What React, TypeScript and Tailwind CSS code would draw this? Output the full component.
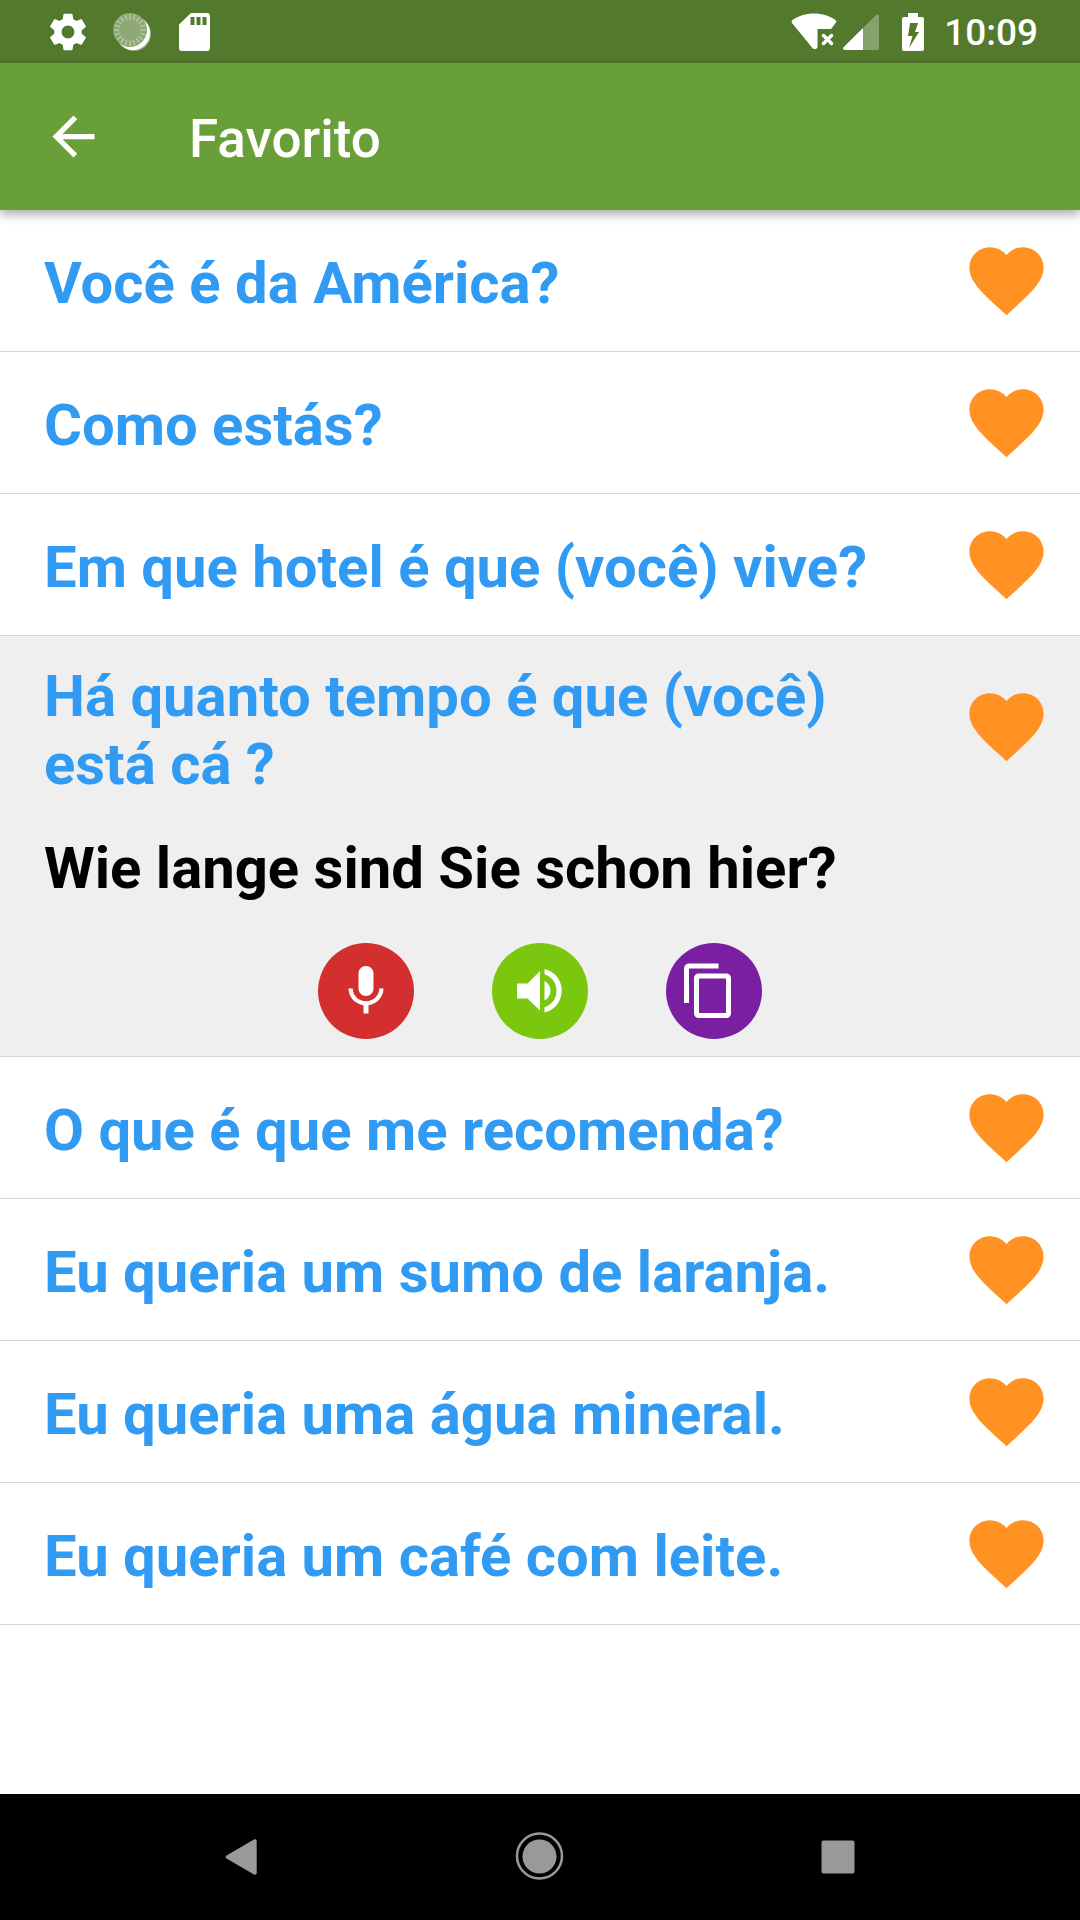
import React from "react";

type Phrase = { text: string; translation?: string };

const phrases: Phrase[] = [
  { text: "Você é da América?" },
  { text: "Como estás?" },
  { text: "Em que hotel é que (você) vive?" },
  {
    text: "Há quanto tempo é que (você) está cá ?",
    translation: "Wie lange sind Sie schon hier?",
  },
  { text: "O que é que me recomenda?" },
  { text: "Eu queria um sumo de laranja." },
  { text: "Eu queria uma água mineral." },
  { text: "Eu queria um café com leite." },
];

function StatusBar() {
  const ticks = Array.from({ length: 20 }, (_, i) => i * 18);
  return (
    <div className="flex h-[63px] items-center justify-between bg-[#52792c] pr-[42px] pl-[46px] text-white">
      <div className="flex items-center gap-[21px]">
        <svg className="size-[44px]" viewBox="0 0 24 24" fill="currentColor" aria-hidden="true">
          <path d="M19.43 12.98c.04-.32.07-.64.07-.98s-.03-.66-.07-.98l2.11-1.65c.19-.15.24-.42.12-.64l-2-3.46c-.12-.22-.39-.3-.61-.22l-2.49 1c-.52-.4-1.08-.73-1.69-.98l-.38-2.65C14.46 2.18 14.25 2 14 2h-4c-.25 0-.46.18-.49.42l-.38 2.65c-.61.25-1.17.59-1.69.98l-2.49-1c-.23-.09-.49 0-.61.22l-2 3.46c-.13.22-.07.49.12.64l2.11 1.65c-.04.32-.07.65-.07.98s.03.66.07.98l-2.11 1.65c-.19.15-.24.42-.12.64l2 3.46c.12.22.39.3.61.22l2.49-1c.52.4 1.08.73 1.69.98l.38 2.65c.03.24.24.42.49.42h4c.25 0 .46-.18.49-.42l.38-2.65c.61-.25 1.17-.59 1.69-.98l2.49 1c.23.09.49 0 .61-.22l2-3.46c.12-.22.07-.49-.12-.64l-2.11-1.65zM12 15.5c-1.93 0-3.5-1.57-3.5-3.5s1.57-3.5 3.5-3.5 3.5 1.57 3.5 3.5-1.57 3.5-3.5 3.5z" />
        </svg>
        <svg className="size-[42px]" viewBox="0 0 42 42" aria-hidden="true">
          <circle cx="23" cy="23" r="17" fill="#fff" opacity="0.45" />
          <circle cx="22" cy="22" r="17" fill="#fff" />
          <circle cx="19" cy="19" r="17" fill="#8ea876" />
          {ticks.map((angle) => (
            <path key={angle} d="M19 3v5.500" stroke="#bccbad" strokeWidth="1.300" transform={"rotate(" + angle + " 19 19)"} />
          ))}
        </svg>
        <svg className="size-[42px]" viewBox="0 0 42 42" fill="currentColor" aria-hidden="true">
          <path fillRule="evenodd" d="M17 2h16a3 3 0 0 1 3 3v32a3 3 0 0 1-3 3H8a3 3 0 0 1-3-3V13.500zM16.500 6v8h4V6zM22.500 6v8h4V6zM28.500 6v8h4V6z" />
        </svg>
      </div>
      <div className="flex items-center">
        <svg className="h-[42px] w-[46px]" viewBox="0 0 46 42" fill="currentColor" aria-hidden="true">
          <path d="M1 9.500C13 .300 33 .300 45 9.500c.400.600.300 1.500 0 2l-5 6.500H26.500v18.500c-1.500 2-4 2-5.500 0L1 12c-.400-.900-.500-1.800 0-2.500z" />
          <path d="M32.500 24.500l8 8m0-8l-8 8" stroke="currentColor" strokeWidth="3.500" strokeLinecap="round" />
        </svg>
        <svg className="ml-[6px] h-[42px] w-[36px]" viewBox="0 0 36 42" fill="currentColor" aria-hidden="true">
          <path d="M20 17L33 4c1-.800 3-.400 3 1.500V37a2 2 0 0 1-2 2H20z" opacity="0.300" />
          <path d="M20 17v22H2c-1.800 0-2.600-1.500-1.500-2.700z" />
        </svg>
        <svg className="ml-[22px] h-[42px] w-[24px]" viewBox="0 0 24 42" fill="currentColor" aria-hidden="true">
          <path fillRule="evenodd" d="M7 2h10v4h4a2 2 0 0 1 2 2v30a2 2 0 0 1-2 2H3a2 2 0 0 1-2-2V8a2 2 0 0 1 2-2h4zM9 12L7 25h4.500L8 37l10-16h-4l3-9z" />
        </svg>
        <time className="ml-[19px] pt-[2px] text-[37px] leading-[43px] font-medium">10:09</time>
      </div>
    </div>
  );
}

function Heart() {
  return (
    <svg className="block size-[89px]" viewBox="0 0 24 24" fill="#ff9222" aria-hidden="true">
      <path d="M12 21.350l-1.450-1.320C5.400 15.360 2 12.280 2 8.500 2 5.420 4.420 3 7.500 3c1.740 0 3.410.810 4.500 2.090C13.090 3.810 14.760 3 16.500 3 19.580 3 22 5.420 22 8.500c0 3.780-3.400 6.860-8.550 11.540L12 21.350z" />
    </svg>
  );
}

function Actions() {
  return (
    <div className="flex justify-center gap-[78px] pt-[41px] pb-[17px]">
      <button type="button" aria-label="Gravar" className="flex size-[96px] items-center justify-center rounded-full bg-[#d32f2f]">
        <svg className="size-[60px]" viewBox="0 0 24 24" fill="#fff" aria-hidden="true">
          <path d="M12 14c1.660 0 2.990-1.340 2.990-3L15 5c0-1.660-1.340-3-3-3S9 3.340 9 5v6c0 1.660 1.340 3 3 3zm5.300-3c0 3-2.540 5.100-5.300 5.100S6.700 14 6.700 11H5c0 3.410 2.720 6.230 6 6.720V21h2v-3.280c3.280-.480 6-3.300 6-6.720h-1.700z" />
        </svg>
      </button>
      <button type="button" aria-label="Ouvir" className="flex size-[96px] items-center justify-center rounded-full bg-[#7bc70f]">
        <svg className="size-[96px]" viewBox="0 0 96 96" fill="#fff" aria-hidden="true">
          <path d="M25 40.500v15h10.500L48 67.500V28L35.500 40.500zM52.500 38c8 4 8 15.500 0 19.500zM52.500 26c23 5.500 23 38 0 43.500v-5.200c16-5 16-28 0-33z" />
        </svg>
      </button>
      <button type="button" aria-label="Copiar" className="flex size-[96px] items-center justify-center rounded-full bg-[#7b1fa2]">
        <svg className="size-[96px]" viewBox="0 0 96 96" fill="none" stroke="#fff" strokeWidth="5" aria-hidden="true">
          <path d="M20.500 60V25.500a2.500 2.500 0 0 1 2.500-2.500H52.500" />
          <rect x="30.500" y="33" width="32" height="39.500" rx="2" />
        </svg>
      </button>
    </div>
  );
}

function PhraseRow({ phrase }: { phrase: Phrase }) {
  const open = phrase.translation !== undefined;
  return (
    <li className={open ? "border-b border-[#d7d7d7] bg-[#efefef]" : "border-b border-[#d7d7d7] bg-white"}>
      <div className={open ? "flex items-center pt-[18px] pr-[29px] pl-[44px]" : "flex h-[141px] items-center pr-[29px] pl-[44px]"}>
        <h2
          className={
            open
              ? "min-w-0 flex-1 pt-[8px] pr-[80px] text-[58px] leading-[68px] font-bold text-[#319af2]"
              : "min-w-0 flex-1 pt-[4px] pr-[80px] text-[58px] leading-[68px] font-bold text-[#319af2]"
          }
        >
          {phrase.text}
        </h2>
        <button type="button" aria-label="Remover dos favoritos" aria-pressed="true">
          <Heart />
        </button>
      </div>
      {open && (
        <>
          <p className="mt-[36px] px-[44px] text-[58px] leading-[68px] font-bold text-black">{phrase.translation}</p>
          <Actions />
        </>
      )}
    </li>
  );
}

function NavigationBar() {
  return (
    <nav className="flex h-[126px] items-center justify-center gap-[202px] bg-black text-[#999999]">
      <button type="button" aria-label="Voltar">
        <svg className="size-[96px]" viewBox="0 0 96 96" fill="currentColor" aria-hidden="true">
          <path d="M32.500 46.500L60 30.500c1.300-.700 2.700 0 2.700 1.400v32.200c0 1.400-1.400 2.100-2.700 1.400L32.500 49.500c-1.200-.700-1.200-2.300 0-3z" />
        </svg>
      </button>
      <button type="button" aria-label="Início">
        <svg className="size-[96px]" viewBox="0 0 96 96" aria-hidden="true">
          <circle cx="47.500" cy="47" r="22.500" fill="none" stroke="currentColor" strokeWidth="2.500" />
          <circle cx="47.500" cy="47.500" r="17" fill="currentColor" />
        </svg>
      </button>
      <button type="button" aria-label="Recentes">
        <svg className="size-[96px]" viewBox="0 0 96 96" fill="currentColor" aria-hidden="true">
          <rect x="31.500" y="31.500" width="33" height="33" rx="2" />
        </svg>
      </button>
    </nav>
  );
}

export default function App() {
  return (
    <div className="flex min-h-screen flex-col bg-white font-[Roboto,sans-serif]">
      <StatusBar />
      <header className="relative flex h-[147px] items-center bg-[#689f38] pl-[42px] text-white shadow-[0_4px_10px_rgba(0,0,0,0.35)]">
        <button type="button" aria-label="Voltar">
          <svg className="size-[63px]" viewBox="0 0 24 24" fill="currentColor" aria-hidden="true">
            <path d="M20 11H7.830l5.590-5.590L12 4l-8 8 8 8 1.410-1.410L7.830 13H20v-2z" />
          </svg>
        </button>
        <h1 className="ml-[84px] pt-1 text-[53px] leading-[62px] font-medium">Favorito</h1>
      </header>
      <main className="flex-1">
        <ul>
          {phrases.map((phrase) => (
            <PhraseRow key={phrase.text} phrase={phrase} />
          ))}
        </ul>
      </main>
      <NavigationBar />
    </div>
  );
}
